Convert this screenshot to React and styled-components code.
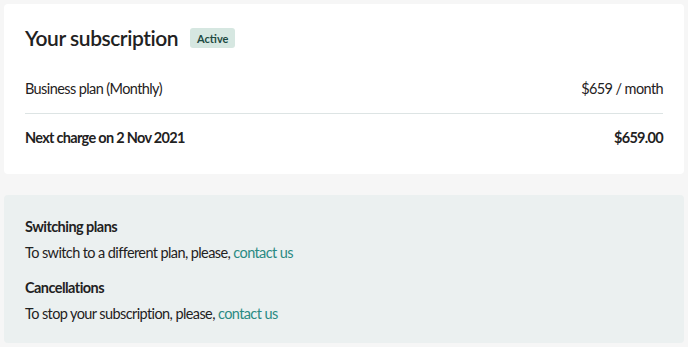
import React from 'react';
import styled, { createGlobalStyle } from 'styled-components';

const GlobalStyle = createGlobalStyle`
  html, body {
    margin: 0;
    padding: 0;
    background: #f6f6f6;
  }
  body {
    font-family: Lato, "Open Sans", sans-serif;
    color: #1f2222;
    -webkit-font-smoothing: antialiased;
  }
`;

const Page = styled.div`
  display: flex;
  flex-direction: column;
  gap: 21px;
  padding: 4px;
`;

const Card = styled.section`
  border-radius: 4px;
  background: ${(p) => (p.$muted ? '#ebf0f0' : '#ffffff')};
  padding: ${(p) => (p.$muted ? '20px 21px 17px' : '21px 21px 12px')};
`;

const Header = styled.div`
  display: flex;
  align-items: center;
  gap: 12px;
  height: 26px;
  margin-bottom: 14px;
  h1 {
    margin: 0;
    font-size: 21px;
    font-weight: 600;
    line-height: 26px;
    letter-spacing: -0.45px;
  }
`;

const Badge = styled.span`
  display: inline-flex;
  align-items: center;
  height: 20px;
  padding: 0 7px;
  border-radius: 3px;
  background: #d6e7e1;
  color: #1d4a42;
  font-size: 11px;
  font-weight: 700;
`;

const Row = styled.div`
  display: flex;
  justify-content: space-between;
  align-items: center;
  padding: 12px 0;
  line-height: 24px;
  font-size: 14.5px;
  font-weight: ${(p) => (p.$strong ? 700 : 400)};
  letter-spacing: ${(p) => (p.$strong ? '-0.7px' : '-0.6px')};
  & + & {
    border-top: 1px solid #dde4e4;
  }
`;

const Heading = styled.h3`
  margin: ${(p) => (p.$first ? '0' : '11px 0 0')};
  font-size: 14.5px;
  font-weight: 700;
  line-height: 24px;
  letter-spacing: -0.55px;
`;

const Text = styled.p`
  margin: 2px 0 0;
  font-size: 14.5px;
  line-height: 24px;
  letter-spacing: -0.6px;
  a {
    color: #2a8a83;
    text-decoration: none;
  }
`;

export default function App() {
  return (
    <>
      <GlobalStyle />
      <Page>
        <Card>
          <Header>
            <h1>Your subscription</h1>
            <Badge>Active</Badge>
          </Header>
          <Row>
            <span>Business plan (Monthly)</span>
            <span>$659 / month</span>
          </Row>
          <Row $strong>
            <span>Next charge on 2 Nov 2021</span>
            <span>$659.00</span>
          </Row>
        </Card>
        <Card $muted>
          <Heading $first>Switching plans</Heading>
          <Text>
            To switch to a different plan, please, <a href="#">contact us</a>
          </Text>
          <Heading>Cancellations</Heading>
          <Text>
            To stop your subscription, please, <a href="#">contact us</a>
          </Text>
        </Card>
      </Page>
    </>
  );
}
